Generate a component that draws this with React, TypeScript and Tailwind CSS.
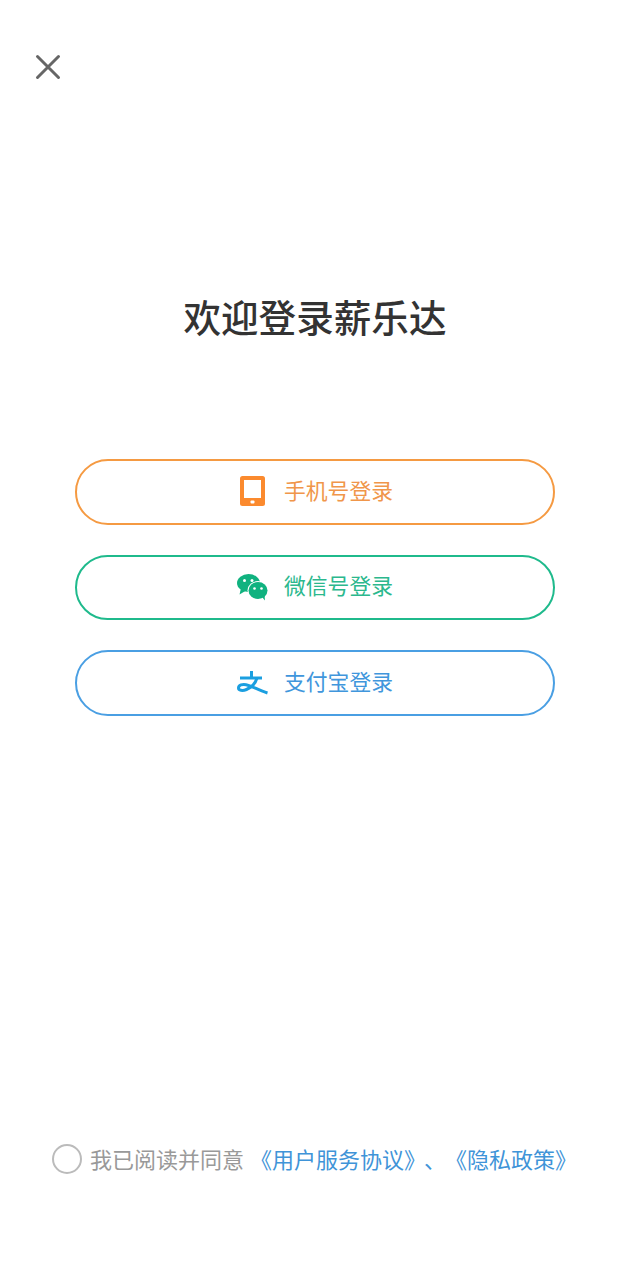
const font = { fontFamily: '"Noto Sans CJK SC", sans-serif' };

const PhoneIcon = () => (
  <svg className="-translate-y-px" width="25" height="30" viewBox="0 0 25 30">
    <rect width="25" height="30" rx="2.500" fill="#fb8a2e" />
    <rect x="4" y="4" width="17" height="18" fill="#fff" />
    <rect x="10.500" y="24.500" width="4" height="3" rx="1" fill="#fff" />
  </svg>
);

const WechatIcon = () => (
  <svg width="31" height="27" viewBox="0 0 31 27">
    <ellipse cx="11.500" cy="9" rx="11.500" ry="9" fill="#10b27f" />
    <path d="M4 14l-1.500 6.500L10 16z" fill="#10b27f" />
    <ellipse cx="21" cy="16.500" rx="10.500" ry="9.500" fill="#fff" />
    <ellipse cx="21" cy="16.500" rx="9.500" ry="8.500" fill="#10b27f" />
    <path d="M25 23l3 3.500-.5-5.500z" fill="#10b27f" />
    <circle cx="7.500" cy="6.500" r="1.500" fill="#fff" />
    <circle cx="15" cy="6.500" r="1.500" fill="#fff" />
    <circle cx="17.500" cy="14.500" r="1.300" fill="#fff" />
    <circle cx="24.500" cy="14.500" r="1.300" fill="#fff" />
  </svg>
);

const AlipayIcon = () => (
  <svg width="31" height="24" viewBox="0 0 31 24" fill="none" stroke="#1b9fe0" strokeWidth="3">
    <path d="M3 7h22" />
    <path d="M14.500 0v7" />
    <path d="M20 7c-1.500 5-5.500 9.500-10.500 11.500-4 1.700-8 1-8-1.500 0-3 4-4 7.500-3.300 6 1.100 12.500 5.600 21.500 8.300" />
  </svg>
);

const logins = [
  { label: '手机号登录', border: 'border-[#f59a42]', text: 'text-[#f0964a]', icon: <PhoneIcon /> },
  { label: '微信号登录', border: 'border-[#1fba8c]', text: 'text-[#2bb88d]', icon: <WechatIcon /> },
  { label: '支付宝登录', border: 'border-[#4a9fe3]', text: 'text-[#4096dc]', icon: <AlipayIcon /> },
];

export default function App() {
  return (
    <div className="flex h-[1280px] w-[630px] flex-col bg-white" style={font}>
      <div className="pl-[35px] pt-[54px]">
        <svg width="26" height="26" viewBox="0 0 26 26" stroke="#666" strokeWidth="3" strokeLinecap="round">
          <path d="M2.500 2.500l21 21M23.500 2.500l-21 21" />
        </svg>
      </div>
      <h1 className="mt-[208px] text-center text-[37.600px] leading-[56px] font-medium text-[#333]">欢迎登录薪乐达</h1>
      <div className="mt-[115px] flex flex-col items-center gap-[30px]">
        {logins.map((item) => (
          <div
            key={item.label}
            className={`flex h-[65.500px] w-[480px] items-center rounded-[33px] border-2 ${item.border}`}
          >
            <div className="ml-[158px] flex w-[34px] justify-center">{item.icon}</div>
            <span className={`ml-[15px] pb-[4px] text-[21.800px] leading-none ${item.text}`}>{item.label}</span>
          </div>
        ))}
      </div>
      <div className="mt-auto mb-[105px] ml-[52px] flex items-center text-[22px] leading-[30px] whitespace-nowrap">
        <div className="h-[30px] w-[30px] rounded-full border-2 border-[#bbb]" />
        <span className="ml-[8px] pb-[2px] text-[#999]">我已阅读并同意</span>
        <span className="ml-[6px] pb-[2px] text-[#3f94d8]">
          《用户服务协议<span className="tracking-[9px]">》</span>
          <span className="tracking-[10px]">、</span>《隐私政策》
        </span>
      </div>
    </div>
  );
}
